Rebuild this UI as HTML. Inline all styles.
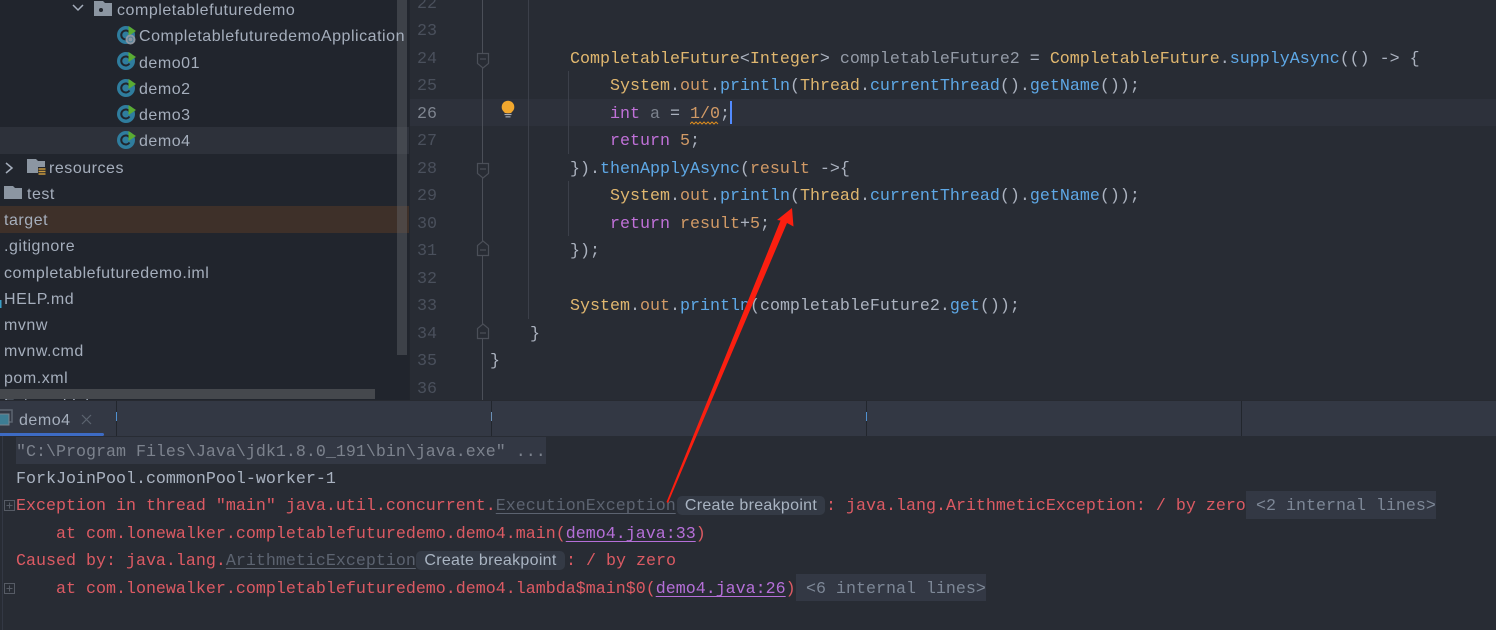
<!DOCTYPE html>
<html><head><meta charset="utf-8">
<style>
html,body{margin:0;padding:0;background:#282c34}
#r{position:relative;width:1496px;height:630px;overflow:hidden;background:#282c34}
.a{position:absolute}
.s{position:absolute;font:16px/20px "Liberation Sans",sans-serif;letter-spacing:.53px;color:#a5aebc;white-space:pre;transform:translateY(calc(-50% + 4px))}
.m{position:absolute;font:16.67px/20px "Liberation Mono",monospace;white-space:pre;color:#abb2bf;transform:translateY(calc(-50% + 4px))}
.n{color:#4a505c}
.y{color:#e0b76f}.b{color:#5ea8e6}.k{color:#c071d8}.o{color:#d19a66}.p{color:#abb2bf}.g{color:#7c828d}.v{color:#949ba7}
.e{color:#dc5a63}.l{color:#5c6370;text-decoration:underline;text-underline-offset:3px}.u{color:#b56fd8;text-decoration:underline;text-underline-offset:3px}
.pill{position:absolute;background:#343a45;border-radius:5px;color:#a9b4c2;font:16px/19px "Liberation Sans",sans-serif;letter-spacing:.3px;text-align:center;white-space:pre}
.i{position:absolute;background:#333844}
</style></head><body><div id="r">

<!-- sidebar -->
<div class="a" style="left:0;top:0;width:409px;height:401px;background:#21252d"></div>
<div class="a" style="left:0;top:127px;width:409px;height:27px;background:#2d313a"></div>
<div class="a" style="left:0;top:206px;width:409px;height:27px;background:#3e3029"></div>
<div class="a" style="left:397px;top:0;width:10px;height:355px;background:rgba(100,104,110,.42)"></div>
<div class="a" style="left:0;top:389px;width:375px;height:10px;background:#45484d"></div>
<div class="a" style="left:0;top:399px;width:409px;height:2px;overflow:hidden"><div class="s" style="left:4px;top:2px">External Libraries</div></div>

<svg class="a" style="left:0;top:0" width="409" height="401" viewBox="0 0 409 401">
<defs>
<g id="c"><circle cx="9" cy="9" r="9" fill="#2f7d9e"/><path d="M12.5 6.5A4.5 4.5 0 1 0 12.5 11.5" fill="none" stroke="#21252d" stroke-width="2"/><path d="M11.500 0L19 5L11.500 10Z" fill="#5aab32"/></g>
</defs>
<path d="M73 5L78 10L83 5" fill="none" stroke="#a5aebc" stroke-width="1.5"/>
<path d="M94 1h9l2 2h7v13H94z" fill="#8c96a2"/><circle cx="101" cy="10" r="2" fill="#21252d"/>
<use href="#c" x="117" y="26"/>
<circle cx="130.500" cy="39.500" r="5" fill="#8c96a2"/><circle cx="130.500" cy="39.500" r="2.500" fill="none" stroke="#4a7f98"/>
<use href="#c" x="117" y="52"/>
<use href="#c" x="117" y="79"/>
<use href="#c" x="117" y="105"/>
<use href="#c" x="117" y="131"/>
<path d="M6 163L12 168L6 173" fill="none" stroke="#a5aebc" stroke-width="1.5"/>
<path d="M27 159h9l2 2h7v12H27z" fill="#8c96a2"/><rect x="38" y="167" width="8" height="9" fill="#21252d"/>
<path d="M38.500 169h7M38.500 171.500h7M38.500 174h7" stroke="#c99a3f" stroke-width="1.500"/>
<path d="M4 186h9l2 2h7v11H4z" fill="#8c96a2"/>
<rect x="0" y="300" width="1.500" height="8" fill="#3a9fc6"/>
</svg>

<div class="s" style="left:117px;top:7px">completablefuturedemo</div>
<div class="s" style="left:139px;top:33px">CompletablefuturedemoApplication</div>
<div class="s" style="left:139px;top:60px">demo01</div>
<div class="s" style="left:139px;top:86px">demo2</div>
<div class="s" style="left:139px;top:112px">demo3</div>
<div class="s" style="left:139px;top:138px">demo4</div>
<div class="s" style="left:49px;top:165px">resources</div>
<div class="s" style="left:27px;top:191px">test</div>
<div class="s" style="left:4px;top:217px">target</div>
<div class="s" style="left:4px;top:243px">.gitignore</div>
<div class="s" style="left:4px;top:270px">completablefuturedemo.iml</div>
<div class="s" style="left:4px;top:296px">HELP.md</div>
<div class="s" style="left:4px;top:322px">mvnw</div>
<div class="s" style="left:4px;top:348px">mvnw.cmd</div>
<div class="s" style="left:4px;top:375px">pom.xml</div>

<!-- editor -->
<div class="a" style="left:409px;top:0;width:1px;height:401px;background:#22262d"></div>
<div class="a" style="left:410px;top:99px;width:1086px;height:27px;background:#2d313b"></div>
<div class="a" style="left:482px;top:0;width:1px;height:401px;background:#4b4f58"></div>
<div class="a" style="left:528px;top:0;width:1px;height:319px;background:#3c404a"></div>
<div class="a" style="left:568px;top:71px;width:1px;height:83px;background:#3c404a"></div>
<div class="a" style="left:568px;top:181px;width:1px;height:55px;background:#3c404a"></div>

<svg class="a" style="left:470px;top:0" width="60" height="401" viewBox="470 0 60 401">
<g fill="#282c34" stroke="#4b4f58" stroke-width="1.200">
<path d="M477.500 53.500h11v10l-5.500 4.500l-5.500-4.500z"/><path d="M480 59h6" />
<path d="M477.500 163.500h11v10l-5.500 4.500l-5.500-4.500z"/><path d="M480 169h6"/>
<path d="M477.500 255.500h11v-10l-5.500-4.500l-5.500 4.500z"/><path d="M480 250h6"/>
<path d="M477.500 338.500h11v-10l-5.500-4.500l-5.500 4.500z"/><path d="M480 333h6"/>
</g>
<circle cx="508" cy="107" r="6.300" fill="#f2a82e"/>
<path d="M504.500 110h7v3h-7z" fill="#f2a82e"/>
<path d="M504.500 114.500h7" stroke="#a9aeb6" stroke-width="1.200"/><path d="M505.500 116.800h5" stroke="#8a8f97" stroke-width="1.500"/>
</svg>

<div class="m n" style="left:417px;top:1px">22</div>
<div class="m n" style="left:417px;top:28px">23</div>
<div class="m n" style="left:417px;top:56px">24</div>
<div class="m n" style="left:417px;top:83px">25</div>
<div class="m" style="left:417px;top:111px;color:#7f8590">26</div>
<div class="m n" style="left:417px;top:138px">27</div>
<div class="m n" style="left:417px;top:166px">28</div>
<div class="m n" style="left:417px;top:193px">29</div>
<div class="m n" style="left:417px;top:221px">30</div>
<div class="m n" style="left:417px;top:248px">31</div>
<div class="m n" style="left:417px;top:276px">32</div>
<div class="m n" style="left:417px;top:303px">33</div>
<div class="m n" style="left:417px;top:331px">34</div>
<div class="m n" style="left:417px;top:358px">35</div>
<div class="m n" style="left:417px;top:386px">36</div>

<div class="m" style="left:570px;top:56px"><span class="y">CompletableFuture</span>&lt;<span class="y">Integer</span>&gt; <span class="v">completableFuture2</span> = <span class="y">CompletableFuture</span>.<span class="b">supplyAsync</span>(() -&gt; {</div>
<div class="m" style="left:610px;top:83px"><span class="y">System</span>.<span class="o">out</span>.<span class="b">println</span>(<span class="y">Thread</span>.<span class="b">currentThread</span>().<span class="b">getName</span>());</div>
<div class="m" style="left:610px;top:111px"><span class="k">int</span> <span class="g">a</span> = <span class="o">1/0</span>;</div>
<svg class="a" style="left:690px;top:121px" width="32" height="5" viewBox="0 0 32 5"><path d="M0 3l2-2l2 2l2-2l2 2l2-2l2 2l2-2l2 2l2-2l2 2l2-2l2 2l2-2l2 2" fill="none" stroke="#d98a1e" stroke-width="1"/></svg>
<div class="a" style="left:730px;top:101px;width:2px;height:23px;background:#528bff"></div>
<div class="m" style="left:610px;top:138px"><span class="k">return</span> <span class="o">5</span>;</div>
<div class="m" style="left:570px;top:166px">}).<span class="b">thenApplyAsync</span>(<span class="o">result</span> -&gt;{</div>
<div class="m" style="left:610px;top:193px"><span class="y">System</span>.<span class="o">out</span>.<span class="b">println</span>(<span class="y">Thread</span>.<span class="b">currentThread</span>().<span class="b">getName</span>());</div>
<div class="m" style="left:610px;top:221px"><span class="k">return</span> <span class="o">result</span>+<span class="o">5</span>;</div>
<div class="m" style="left:570px;top:248px">});</div>
<div class="m" style="left:570px;top:303px"><span class="y">System</span>.<span class="o">out</span>.<span class="b">println</span>(completableFuture2.<span class="b">get</span>());</div>
<div class="m" style="left:530px;top:331px">}</div>
<div class="m" style="left:490px;top:358px">}</div>

<!-- tool window tabs -->
<div class="a" style="left:0;top:400px;width:1496px;height:1px;background:#272a31"></div>
<div class="i" style="left:0;top:401px;width:1496px;height:35px"></div>
<div class="a" style="left:116px;top:401px;width:1px;height:35px;background:#22262d"></div>
<div class="a" style="left:116px;top:412px;width:1px;height:9px;background:#4f90d0"></div>
<div class="a" style="left:491px;top:401px;width:1px;height:35px;background:#22262d"></div>
<div class="a" style="left:491px;top:412px;width:1px;height:9px;background:#6a8fb5"></div>
<div class="a" style="left:866px;top:401px;width:1px;height:35px;background:#22262d"></div>
<div class="a" style="left:866px;top:412px;width:1px;height:9px;background:#4f90d0"></div>
<div class="a" style="left:1241px;top:401px;width:1px;height:35px;background:#22262d"></div>
<svg class="a" style="left:0;top:408px" width="110" height="28" viewBox="0 0 110 28">
<rect x="-2" y="2" width="14" height="12" fill="none" stroke="#5c6470" stroke-width="1.500"/>
<rect x="-3" y="6" width="12" height="11" fill="#3d7d94" stroke="#7a828c"/>
<path d="M82 7l9 9M91 7l-9 9" stroke="#5c6470" stroke-width="1.200"/>
</svg>
<div class="s" style="left:19px;top:417px">demo4</div>
<div class="a" style="left:0;top:433px;width:104px;height:3px;background:#3d6bc4;border-radius:0 2px 2px 0"></div>

<!-- console -->
<div class="a" style="left:2px;top:436px;width:1px;height:194px;background:#333844"></div>
<div class="a" style="left:16px;top:437px;width:530px;height:27px;background:#333844"></div>
<div class="a" style="left:1246px;top:491px;width:190px;height:28px;background:#333844"></div>
<div class="a" style="left:796px;top:574px;width:190px;height:27px;background:#333844"></div>
<svg class="a" style="left:0;top:495px" width="20" height="105" viewBox="0 495 20 105">
<g fill="none" stroke="#565b65"><rect x="4.500" y="500.500" width="10" height="10"/><path d="M6.500 505.500h6M9.500 502.500v6"/><rect x="4.500" y="583.500" width="10" height="10"/><path d="M6.500 588.500h6M9.500 585.500v6"/></g>
</svg>

<div class="m" style="left:16px;top:449px;color:#7c828d">"C:\Program Files\Java\jdk1.8.0_191\bin\java.exe" ...</div>
<div class="m" style="left:16px;top:476px;color:#a9b2c0">ForkJoinPool.commonPool-worker-1</div>
<div class="m e" style="left:16px;top:503px">Exception in thread "main" java.util.concurrent.<span class="l">ExecutionException</span></div>
<div class="pill" style="left:677px;top:496px;width:148px;height:19px">Create breakpoint</div>
<div class="m e" style="left:826px;top:503px">: java.lang.ArithmeticException: / by zero</div>
<div class="m" style="left:1256px;top:503px;color:#7d8796">&lt;2 internal lines&gt;</div>
<div class="m e" style="left:16px;top:531px">    at com.lonewalker.completablefuturedemo.demo4.main(<span class="u">demo4.java:33</span>)</div>
<div class="m e" style="left:16px;top:558px">Caused by: java.lang.<span class="l">ArithmeticException</span></div>
<div class="pill" style="left:416px;top:551px;width:149px;height:19px">Create breakpoint</div>
<div class="m e" style="left:566px;top:558px">: / by zero</div>
<div class="m e" style="left:16px;top:586px">    at com.lonewalker.completablefuturedemo.demo4.lambda$main$0(<span class="u">demo4.java:26</span>)</div>
<div class="m" style="left:806px;top:586px;color:#7d8796">&lt;6 internal lines&gt;</div>

<!-- arrow -->
<svg class="a" style="left:0;top:0" width="1496" height="630" viewBox="0 0 1496 630">
<path d="M792 208L793.500 226.500L787 223L668 503L666.500 502L780.500 220.500L777 220Z" fill="#fb1f10"/>
</svg>
</div></body></html>
